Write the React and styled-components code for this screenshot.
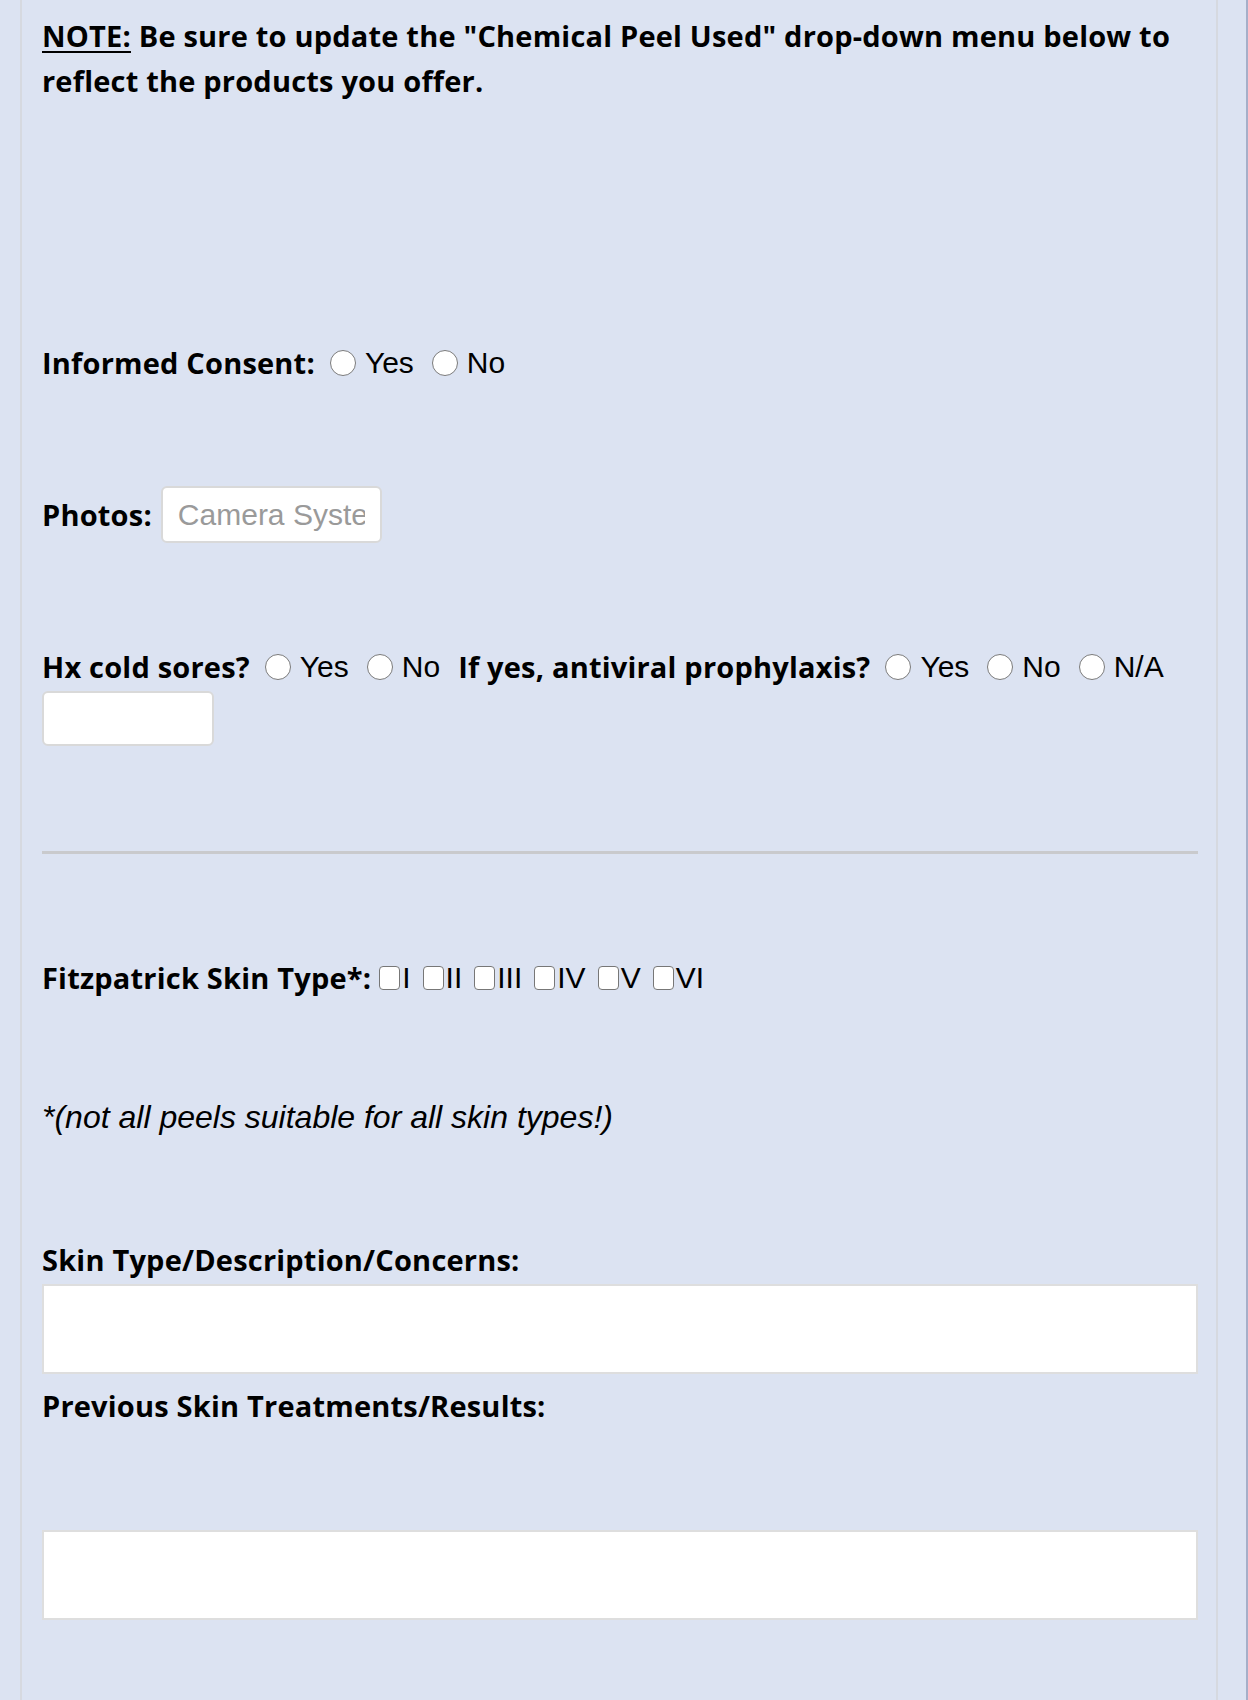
import React from 'react';
import styled, { createGlobalStyle } from 'styled-components';

const GlobalStyle = createGlobalStyle`
html, body {
  margin: 0;
  padding: 0;
  background: #dce3f2;
}
* { box-sizing: border-box; }
`

const Frame = styled.div`
min-height: 1700px;
border-right: 2px solid #a5afc9;
padding-left: 20px;
padding-right: 28px;
`

const Panel = styled.div`
min-height: 1700px;
border-left: 2px solid #d6d9e0;
border-right: 2px solid #d6d9e0;
padding: 13px 18px 40px 20px;
font-family: 'Open Sans', 'Liberation Sans', sans-serif;
color: #000;
`

const Note = styled.p`
margin: 0;
font-size: 29px;
font-weight: 700;
line-height: 45px;
letter-spacing: 0.2px;
u { text-underline-offset: 4px; }
`

const Row = styled.div`
display: flex;
align-items: center;
flex-wrap: wrap;
min-height: 45px;
margin-top: ${props => props.gap || 0}px;
`

const Label = styled.span`
font-size: 29px;
font-weight: 700;
line-height: 45px;
letter-spacing: 0.2px;
margin-right: ${props => props.space || 15}px;
white-space: nowrap;
`

const Radio = styled.input.attrs({ type: 'radio' })`
appearance: none;
margin: 0 9px 0 0;
width: 26px;
height: 26px;
border-radius: 50%;
border: 1.5px solid #7b7b7b;
background: #fff;
flex: none;
`

const Check = styled.input.attrs({ type: 'checkbox' })`
appearance: none;
margin: 0 2px 0 0;
width: 21px;
height: 24px;
border-radius: 4px;
border: 1.5px solid #777;
background: #fff;
flex: none;
`

const Choice = styled.span`
font-family: 'Liberation Sans', Arial, sans-serif;
font-size: 30px;
line-height: 45px;
margin-right: ${props => props.space || 18}px;
`

const TextInput = styled.input`
width: ${props => props.w}px;
height: ${props => props.h}px;
border: 2px solid #d9d9d9;
border-radius: 6px;
background: #fff;
padding: 0 15px;
font-family: 'Liberation Sans', Arial, sans-serif;
font-size: 30px;
margin-top: ${props => props.top || 0}px;
display: block;
&::placeholder { color: #9a9a9a; }
`

const Rule = styled.hr`
margin: 105px 0 0;
border: none;
height: 3px;
background: #c9cacd;
`

const Hint = styled.p`
margin: 95px 0 0;
font-family: 'Liberation Sans', Arial, sans-serif;
font-style: italic;
font-size: 32px;
line-height: 45px;
`

const Heading = styled.div`
font-size: 29px;
font-weight: 700;
line-height: 45px;
letter-spacing: 0.2px;
margin-top: ${props => props.gap}px;
`

const Area = styled.textarea`
display: block;
width: 100%;
height: 90px;
border: 2px solid #dedede;
background: #fff;
resize: none;
margin-top: ${props => props.gap}px;
`

function Option({ name, label, space }) {
  return (
    <>
      <Radio name={name} />
      <Choice space={space}>{label}</Choice>
    </>
  )
}

export default function App() {
  const types = ['I', 'II', 'III', 'IV', 'V', 'VI'];
  return (
    <>
      <GlobalStyle />
      <Frame>
        <Panel>
          <Note>
            <u>NOTE:</u> Be sure to update the "Chemical Peel Used" drop-down menu below to<br />
            reflect the products you offer.
          </Note>

          <Row gap={237}>
            <Label>Informed Consent:</Label>
            <Option name="consent" label="Yes" />
            <Option name="consent" label="No" />
          </Row>

          <Row gap={101}>
            <Label space={9}>Photos:</Label>
            <TextInput w={221} h={57} placeholder="Camera System" />
          </Row>

          <Row gap={101}>
            <Label>Hx cold sores?</Label>
            <Option name="sores" label="Yes" />
            <Option name="sores" label="No" />
            <Label>If yes, antiviral prophylaxis?</Label>
            <Option name="antiviral" label="Yes" />
            <Option name="antiviral" label="No" />
            <Option name="antiviral" label="N/A" />
          </Row>
          <TextInput w={172} h={55} top={2} />

          <Rule />

          <Row gap={101}>
            <Label space={8}>Fitzpatrick Skin Type*:</Label>
            {types.map(t => (
              <React.Fragment key={t}>
                <Check />
                <Choice space={12}>{t}</Choice>
              </React.Fragment>
            ))}
          </Row>

          <Hint>*(not all peels suitable for all skin types!)</Hint>

          <Heading gap={97}>Skin Type/Description/Concerns:</Heading>
          <Area gap={2} />
          <Heading gap={9}>Previous Skin Treatments/Results:</Heading>
          <Area gap={102} />
        </Panel>
      </Frame>
    </>
  )
}
